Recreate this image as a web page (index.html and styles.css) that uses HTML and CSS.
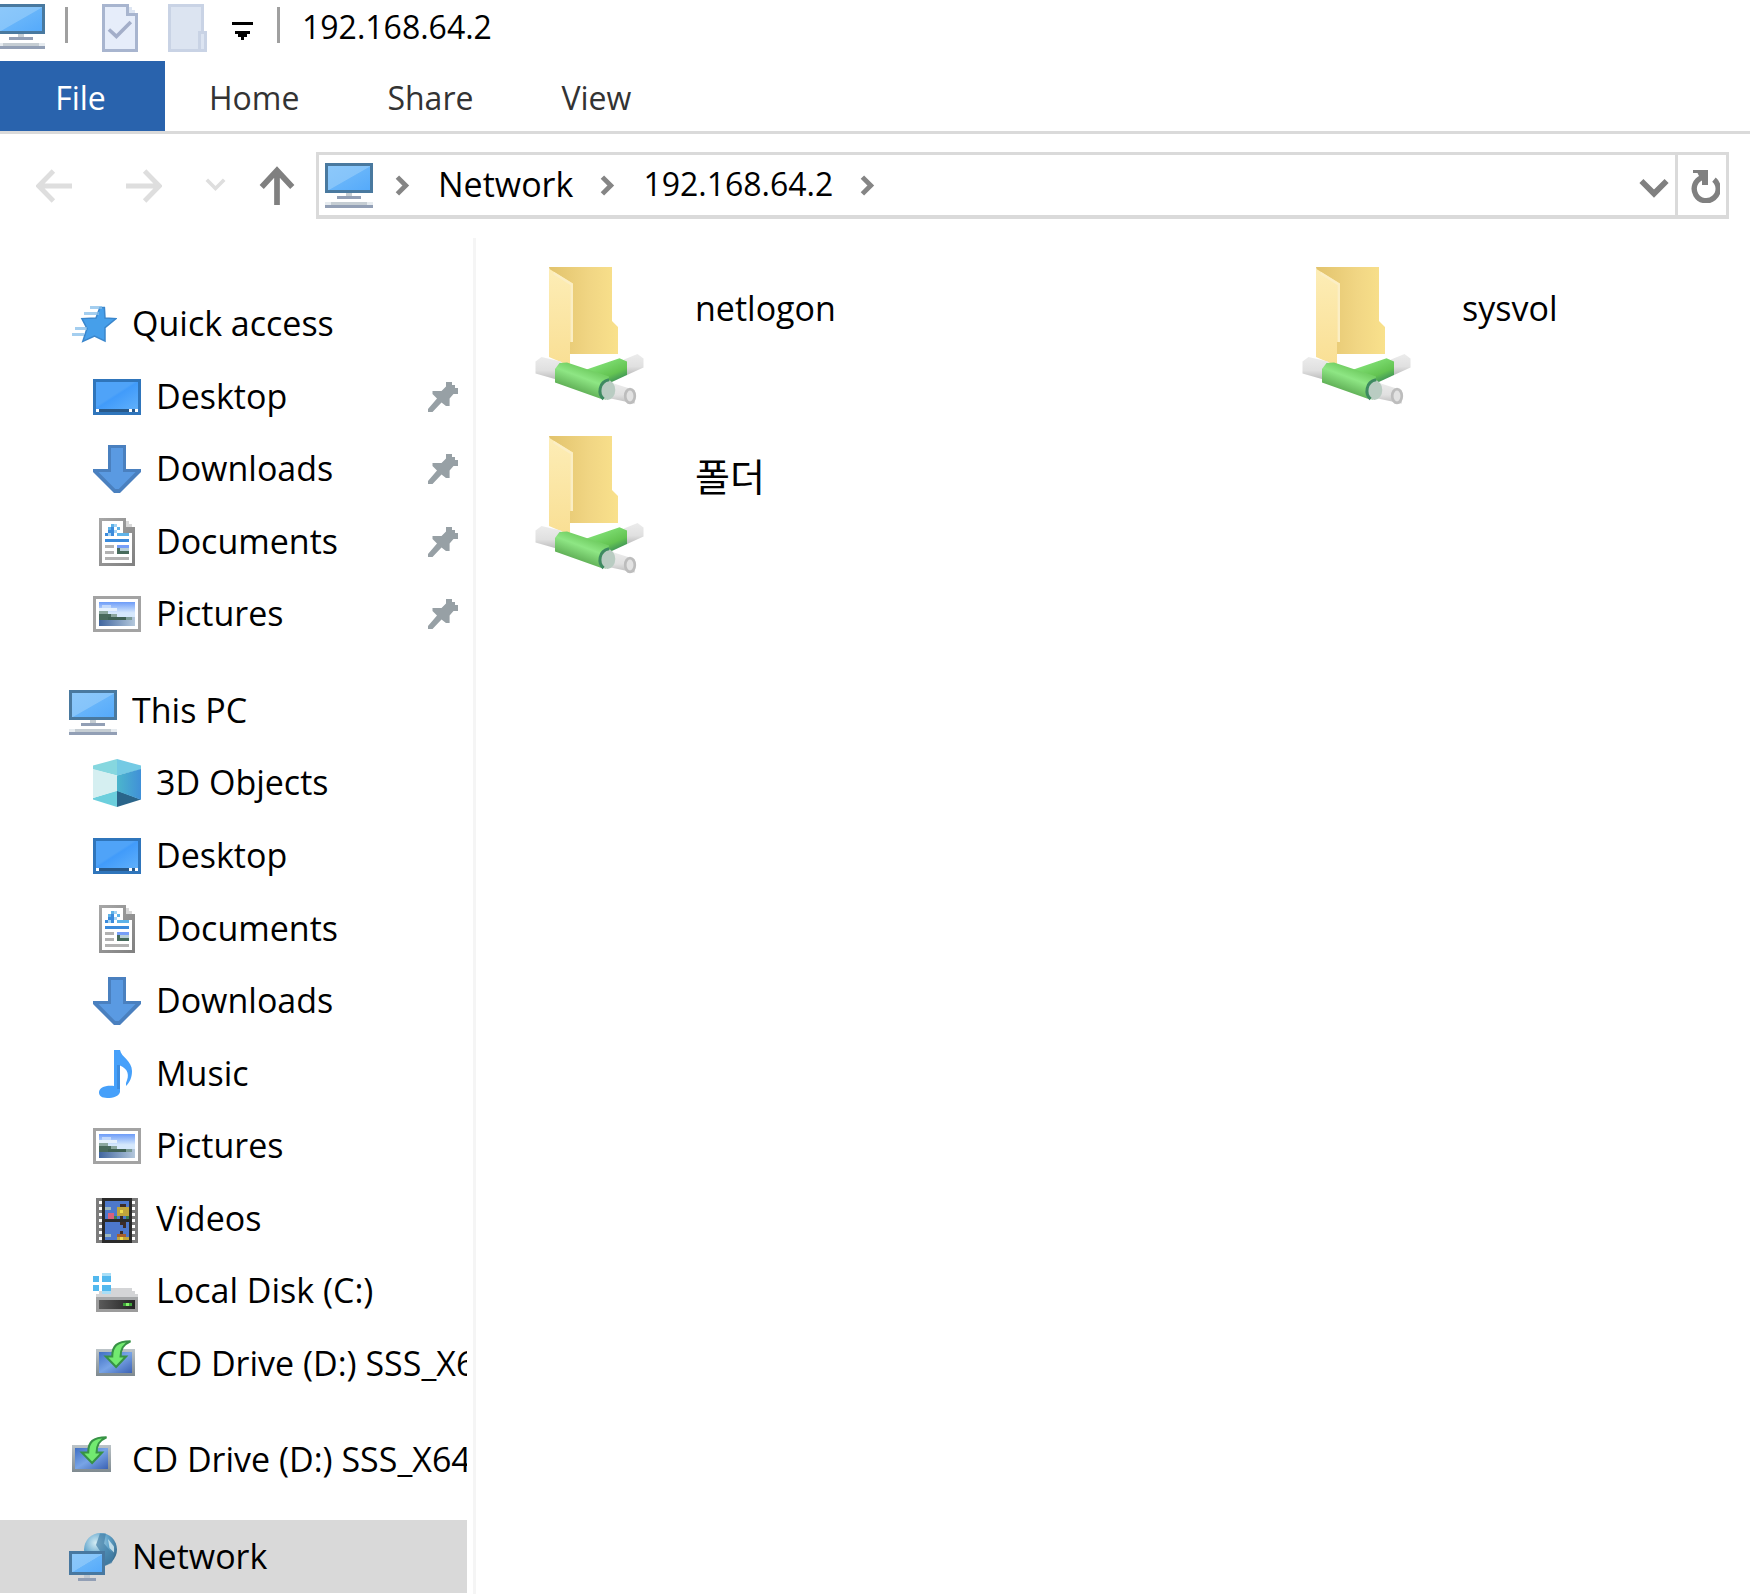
FILE: index.html
```html
<!DOCTYPE html>
<html lang="en">
<head>
<meta charset="utf-8">
<title>192.168.64.2</title>
<meta name="viewport" content="width=device-width, initial-scale=1">
<link rel="stylesheet" href="styles.css">
</head>
<body>
<svg class="sprite" aria-hidden="true">
  <defs>
    <linearGradient id="g-screen" x1="0" y1="0" x2="1" y2="1"><stop offset="0" stop-color="#8cc8fa"/><stop offset=".5" stop-color="#85c4fa"/><stop offset=".52" stop-color="#66b4fa"/><stop offset="1" stop-color="#55aafb"/></linearGradient>
    <linearGradient id="g-desk" x1="0" y1="0" x2="1" y2="1"><stop offset="0" stop-color="#4fa3f8"/><stop offset=".45" stop-color="#4fa3f8"/><stop offset=".5" stop-color="#419bfa"/><stop offset="1" stop-color="#5fb0fb"/></linearGradient>
    <linearGradient id="g-paper" x1="0" y1="0" x2="1" y2="1"><stop offset="0" stop-color="#a8a8a8"/><stop offset="1" stop-color="#808080"/></linearGradient>
    <linearGradient id="g-right" x1="0" y1="0" x2="1" y2="0"><stop offset="0" stop-color="#4cb6cc"/><stop offset="1" stop-color="#4090d8"/></linearGradient>
    <linearGradient id="g-cd" x1="0" y1="0" x2="1" y2="1"><stop offset="0" stop-color="#3f6fc4"/><stop offset=".5" stop-color="#78a4e6"/><stop offset="1" stop-color="#3c62b4"/></linearGradient>
    <linearGradient id="g-edge" x1="0" y1="0" x2="0" y2="1"><stop offset="0" stop-color="#bcc4c8"/><stop offset="1" stop-color="#7f8a90"/></linearGradient>
    <linearGradient id="g-dark" x1="0" y1="0" x2="1" y2="0"><stop offset="0" stop-color="#5a5a5a"/><stop offset="1" stop-color="#222"/></linearGradient>
    <linearGradient id="g-sky" x1="0" y1="0" x2="0" y2="1"><stop offset="0" stop-color="#6d9cf8"/><stop offset=".6" stop-color="#d5e8fc"/><stop offset="1" stop-color="#d5e8fc"/></linearGradient>
    <linearGradient id="g-sea" x1="0" y1="0" x2="1" y2="0"><stop offset="0" stop-color="#41669f"/><stop offset="1" stop-color="#b4c8dc"/></linearGradient>
    <radialGradient id="g-globe" cx=".35" cy=".3" r=".8"><stop offset="0" stop-color="#d4ecf4"/><stop offset=".5" stop-color="#62a5cc"/><stop offset="1" stop-color="#2f5f80"/></radialGradient>
    <linearGradient id="g-back" x1="0" y1="0" x2="1" y2="0"><stop offset="0" stop-color="#e2c36c"/><stop offset=".6" stop-color="#f1d684"/><stop offset="1" stop-color="#f9e18c"/></linearGradient>
    <linearGradient id="g-flap" x1="0" y1="0" x2="0" y2="1"><stop offset="0" stop-color="#fdedb6"/><stop offset="1" stop-color="#f9df94"/></linearGradient>
    <linearGradient id="g-pipe" gradientUnits="userSpaceOnUse" x1="17" y1="34" x2="14" y2="42"><stop offset="0" stop-color="#74d066"/><stop offset=".35" stop-color="#8ee684"/><stop offset="1" stop-color="#5aa850"/></linearGradient>
    <linearGradient id="g-arm" gradientUnits="userSpaceOnUse" x1="23" y1="32" x2="26" y2="39"><stop offset="0" stop-color="#7cdc70"/><stop offset=".6" stop-color="#64c452"/><stop offset="1" stop-color="#3c8e58"/></linearGradient>
    <linearGradient id="g-cap" x1="0" y1="0" x2="0" y2="1"><stop offset="0" stop-color="#ececec"/><stop offset=".6" stop-color="#e0e0e0"/><stop offset="1" stop-color="#bcbcbc"/></linearGradient>
  </defs>
  <symbol id="i-pc" viewBox="0 0 16 16"><g shape-rendering="crispEdges">
    <path fill="#49799f" d="M0 1h16v10H0z"/><path fill="url(#g-screen)" d="M1 2h14v8H1z"/>
    <path fill="#c5cdd3" d="M7 11h2v1H7z"/><path fill="#929fb5" d="M4 12h8v1H4zM0 15h16v1H0z"/>
    <path fill="#e6ebef" d="M0 14h16v1H0z"/><path fill="#c5cdd3" d="M2 14h12v1H2z"/></g></symbol>
  <symbol id="i-desktop" viewBox="0 0 16 16"><g shape-rendering="crispEdges">
    <path fill="#2f75bb" d="M0 2h16v12H0z"/><path fill="url(#g-desk)" d="M1 3h14v9H1z"/>
    <path fill="#fff" d="M1 12h14v1H1z"/><path fill="#28598a" d="M2 12h10v1H2zM13 12h1v1h-1z"/></g></symbol>
  <symbol id="i-down" viewBox="0 0 16 16">
    <path fill="#4a80bf" d="M5 0h6v8h5v1l-7 7H7L0 9V8h5z"/><path fill="#5a9ae2" d="M6 1h4v8h4.200L8.600 14.700H7.400L1.800 9H6z"/></symbol>
  <symbol id="i-doc" viewBox="0 0 16 16"><g shape-rendering="crispEdges">
    <path fill="url(#g-paper)" d="M2 0h9v1h1v1h1v1h1v13H2z"/><path fill="#fff" d="M3 1h7v4h3v10H3z"/>
    <path fill="#d9d9d9" d="M11 1h1v1h1v1h-2z"/><path fill="#5fb3e8" d="M8 5h4v1H8zM6 2h1v1H6zM5 3h2v1H5zM8 3h1v1H8z"/>
    <path fill="#3b8bdc" d="M4 7h8v1H4zM6 3h1v3H6zM5 4h1v1H5zM4 5h1v1H4z"/><path fill="#a5d3f3" d="M7 4h1v1H7zM5 5h1v1H5zM7 2h1v1H7z"/>
    <path fill="#b2b2b2" d="M4 9h3v1H4zM4 11h3v1H4zM4 13h8v1H4z"/>
    <path fill="#779ff8" d="M8 9h4v1H8z"/><path fill="#b8cfd8" d="M8 10h4v1H8z"/><path fill="#476b5c" d="M8 11h4v1H8zM8 10h1v1H8z"/></g></symbol>
  <symbol id="i-pic" viewBox="0 0 16 16"><g shape-rendering="crispEdges">
    <path fill="#a3a3a3" d="M0 2h16v12H0z"/><path fill="#fff" d="M1 3h14v10H1z"/>
    <path fill="url(#g-sky)" d="M2 4h12v6H2z"/><path fill="#c3d9fb" d="M3 5h3v1H3z"/><path fill="#e6f1fd" d="M2 6h6v1H2z"/><path fill="url(#g-sea)" d="M2 9h12v3H2z"/>
    <path fill="#8ba79f" d="M2 7h3v1h3v1H2z"/><path fill="#48695c" d="M2 8h4v1h3v1H2z"/><path fill="#3f6154" d="M5 9h6v1H5z"/><path fill="#7c9c98" d="M11 9h2v1h-2z"/></g></symbol>
  <symbol id="i-cube" viewBox="0 0 16 16">
    <path fill="#86d7df" d="M0 2.200 8 0v5.500L0 3.500z"/><path fill="#74cae4" d="M16 2.200 8 0v5.500l8-2z"/>
    <path fill="#6ccfdd" d="M0 13.500 8 16v-5.500L0 13z"/><path fill="#2a658a" d="M16 13.500 8 16v-5.500z"/>
    <path fill="#d5eff1" d="M0 3.300 8 5.500v5.200L0 13z"/><path fill="url(#g-right)" d="M16 3.300 8 5.500v5.200L16 13.600z"/></symbol>
  <symbol id="i-music" viewBox="0 0 16 16">
    <path fill="#46a0fa" d="M5 0h2c.4 2.400 4 3.600 4 7 0 2-.6 3.600-2 5v-1c1.200-2.600.8-4.600-2-5.800V14c-.4 1.400-2 2-4.300 2C1 16 2 15.400 2 14.200 2 12.600 3 11.700 5 12z"/>
    <path fill="#3c8cdf" d="M6 5h1v8H6z"/></symbol>
  <symbol id="i-video" viewBox="0 0 16 16"><g shape-rendering="crispEdges">
    <path fill="#7c7c7c" d="M1 1h14v15H1z"/><path fill="#2a2a2a" d="M3 1h10v15H3z"/>
    <path fill="#fff" d="M2 2h1v1H2zM2 4h1v1H2zM2 6h1v1H2zM2 8h1v1H2zM2 10h1v1H2zM2 12h1v1H2zM2 14h1v1H2zM13 2h1v1h-1zM13 4h1v1h-1zM13 6h1v1h-1zM13 8h1v1h-1zM13 10h1v1h-1zM13 12h1v1h-1zM13 14h1v1h-1z"/>
    <path fill="#4d78cc" d="M4 2h8v6H4zM4 9h8v6H4z"/><path fill="#c0a53c" d="M8 4h4v3H8zM8 14h4v1H8z"/><path fill="#d8607c" d="M5 6h2v2H5z"/>
    <path fill="#9eb8bc" d="M4 4h2v1H4zM4 13h2v1H4z"/><path fill="#3c2c28" d="M9 3h2v1H9zM9 7h1v1H9zM9 9h2v1H9zM10 10h1v1h-1zM9 12h1v1H9z"/><path fill="#a8602c" d="M8 13h3v1H8z"/><path fill="#f0dc4c" d="M9 5h1v1H9zM9 14h1v1H9z"/><path fill="#3b7f50" d="M7 7h1v1H7zM11 7h1v1h-1z"/></g></symbol>
  <symbol id="i-disk" viewBox="0 0 16 16"><g shape-rendering="crispEdges">
    <path fill="#d4d5d7" d="M4 7h9v1h1v1h1v2H1V9h1V8h2z"/><path fill="#a4a6a8" d="M1 10h14v1H1z"/><path fill="#9c9c9c" d="M1 11h14v4H1z"/><path fill="url(#g-dark)" d="M2 11h12v3H2z"/>
    <path fill="#3fa43a" d="M10 12h3v1h-3z"/><path fill="#86f46c" d="M11 12h1v1h-1z"/>
    <path fill="#a9def6" d="M3 2h3v1H3zM3 8h3v1H3z"/><path fill="#52b8ee" d="M0 3h2v2H0zM3 3h3v2H3zM0 6h2v2H0zM3 6h3v2H3z"/></g></symbol>
  <symbol id="i-cd" viewBox="0 0 16 16">
    <path fill="url(#g-edge)" d="M1 3h13v9H1z"/><path fill="url(#g-cd)" d="M2 4h11v7H2z"/>
    <path fill="#72ea70" stroke="#379245" stroke-width=".7" d="M6.400 5.500C6.400 2 8 .4 12.500.4 10 1.500 9.200 3 9.200 5.500h1.800L7.700 9 4.300 5.500z"/></symbol>
  <symbol id="i-net" viewBox="0 0 16 16">
    <circle cx="10.500" cy="5.500" r="5.500" fill="url(#g-globe)"/><path fill="#437fa7" d="M10.300.2h2l-.6 3.300 3.300 4-.7 2.500L12 11l-1-4-2-3z" opacity=".7"/><path fill="#d9edf4" d="M13 2l2 2.500v2L13.500 5z" opacity=".8"/>
    <g shape-rendering="crispEdges"><path fill="#4878a0" d="M0 6h12v8H0z"/><path fill="url(#g-screen)" d="M1 7h10v6H1z"/><path fill="#c0c8d0" d="M5 14h2v1H5z"/><path fill="#929fb5" d="M3 15h6v1H3z"/></g></symbol>
  <symbol id="i-star" viewBox="0 0 16 16">
    <path fill="#469fea" stroke="#3a86cc" stroke-width=".5" d="M10.300 2.500h1.500L12 6l3.700.2L12 9.200V13.700L8.500 12l-3.900 1.800L6 9.500 4.300 6.200 9 6z"/>
    <path fill="#85bde9" d="M7 2h4v1H7zM5 4h5v1H5zM2 9h4v1H2zM1 11h4v1H1z" opacity=".75"/></symbol>
  <symbol id="i-pin" viewBox="0 0 10 10">
    <path fill="#97a0a5" d="M6 0h2v1h1v1h1v2H8.500L7.200 5.500V8H6L4.500 6.800 1.500 10H0V9l3-3.500L1.500 4V3h3L6 1.500z"/></symbol>
  <symbol id="i-check" viewBox="0 0 12 16"><g shape-rendering="crispEdges">
    <path fill="#a8b5cf" d="M0 0h9v1h1v1h1v1h1v13H0z"/><path fill="#e6edfa" d="M1 1h7v3h3v11H1z"/><path fill="#dde5f2" d="M9 1h1v1h1v1H9z"/></g>
    <path fill="none" stroke="#a3aec9" stroke-width="1.200" d="m2.300 8.500 2.500 2.300L9.600 6"/></symbol>
  <symbol id="i-folder" viewBox="0 0 13 16"><g shape-rendering="crispEdges">
    <path fill="#c9d3e5" d="M0 0h12v9h1v7H0z"/><path fill="#dce4f1" d="M1 1h10v8h-1v6H1zM11 10h1v5h-1z"/></g></symbol>
  <symbol id="i-crumb" viewBox="0 0 5 7"><path fill="none" stroke="#858585" stroke-width="1.600" d="M.8.700 3.600 3.500.8 6.300"/></symbol>
  <symbol id="i-share" viewBox="0 0 37 46">
    <path fill="url(#g-back)" d="M5 0h21v18l2 2v9H12z"/><path fill="url(#g-flap)" d="M5 0.600 13 5.500V25h-1v8l-7-3z"/>
    <path fill="none" stroke="#fbeec4" stroke-width=".8" d="M6.500 2 12.600 5.800V25"/>
    <path fill="url(#g-cap)" d="M.5 31.500 2.500 30 9 31.500 7.500 37.500.5 35.500z"/>
    <path fill="url(#g-cap)" d="M30 30.800 34.500 29l2 1.500v3L31 36z"/>
    <path fill="url(#g-arm)" d="M17.500 34.200 28.500 30.400 31 31.500V36l-6.500 3-7-2z"/>
    <path fill="url(#g-pipe)" d="M8.500 32 11 31.800 25 36.500 24 44.200 22 43.800 7 38.500V34z"/>
    <path fill="url(#g-cap)" d="M25 38.300 33.500 41v4.500L24 43.500z"/>
    <ellipse cx="24.500" cy="41" rx="2.600" ry="3.300" fill="#b9ccc2"/><path fill="none" stroke="#3d8a60" stroke-width="1" d="M25 37.600c-3.400.6-3.800 4.800-1.800 6.400"/>
    <ellipse cx="32" cy="43" rx="1.600" ry="2.300" fill="#e2e2e2" stroke="#bdbdbd" stroke-width=".9"/></symbol>
</svg>

<header class="titlebar">
  <svg class="title-pc" viewBox="1 1 15 15"><use href="#i-pc" width="16" height="16"/></svg>
  <span class="sep"></span>
  <button class="tool tool-check" aria-label="Properties"><svg width="36" height="48"><use href="#i-check"/></svg></button>
  <button class="tool tool-folder" aria-label="New folder"><svg width="39" height="48"><use href="#i-folder"/></svg></button>
  <button class="tool tool-more" aria-label="Customize Quick Access Toolbar"><svg width="21" height="18" viewBox="0 0 7 6" shape-rendering="crispEdges"><path d="M0 0h7v1H0zM1 3h5v1H5v1H4v1H3V5H2V4H1z"/></svg></button>
  <span class="sep"></span>
  <h1 class="title">192.168.64.2</h1>
</header>

<div class="tabs" role="tablist">
  <button class="tab tab-file" role="tab">File</button>
  <button class="tab" role="tab">Home</button>
  <button class="tab" role="tab">Share</button>
  <button class="tab" role="tab">View</button>
</div>

<div class="navbar">
  <div class="history">
    <button class="tool" aria-label="Back" disabled><svg width="36" height="36" viewBox="0 0 12 12" fill="none" stroke="#dedede" stroke-width="1.600"><path d="M12 6H1M5.800 1 .9 6l4.900 5"/></svg></button>
    <button class="tool tool-forward" aria-label="Forward" disabled><svg width="36" height="36" viewBox="0 0 12 12" fill="none" stroke="#dedede" stroke-width="1.600"><path d="M0 6h11M6.200 1l4.900 5-4.900 5"/></svg></button>
    <button class="tool tool-recent" aria-label="Recent locations" disabled><svg width="21" height="15" viewBox="0 0 7 5" fill="none" stroke="#dedede" stroke-width="1.200"><path d="m.6.600 2.900 2.900L6.400.6"/></svg></button>
    <button class="tool tool-up" aria-label="Up"><svg width="36" height="39" viewBox="0 0 12 13" fill="none" stroke="#808080" stroke-width="1.900"><path d="M6 13V1.500M.9 7 6 1.500 11.100 7"/></svg></button>
  </div>
  <div class="address">
    <nav class="crumbs" aria-label="Address">
      <svg class="pc" width="48" height="48"><use href="#i-pc"/></svg>
      <svg class="crumb" width="15" height="21"><use href="#i-crumb"/></svg>
      <a href="#network">Network</a>
      <svg class="crumb" width="15" height="21"><use href="#i-crumb"/></svg>
      <a class="ip" href="#host">192.168.64.2</a>
      <svg class="crumb" width="15" height="21"><use href="#i-crumb"/></svg>
    </nav>
    <button class="tool drop" aria-label="Previous locations"><svg width="30" height="21" viewBox="0 0 10 7" fill="none" stroke="#808080" stroke-width="1.900"><path d="m.8 1 4.200 4.200L9.200 1"/></svg></button>
    <button class="tool refresh" aria-label="Refresh"><svg width="30" height="33" viewBox="0 0 10 11"><path fill="none" stroke="#808080" stroke-width="1.800" d="M8 3.200A4 4 0 1 1 4 2.500"/><path fill="#808080" d="M1 0h5v5H4V2.500L3.500 3 2.500 1H1z"/></svg></button>
  </div>
</div>

<div class="body">
  <nav class="sidebar" aria-label="Navigation pane">
    <ul class="group quick">
      <li><a class="row root" href="#quick"><svg><use href="#i-star"/></svg><span>Quick access</span></a></li>
      <li><a class="row" href="#desktop"><svg><use href="#i-desktop"/></svg><span>Desktop</span><svg class="pin"><use href="#i-pin"/></svg></a></li>
      <li><a class="row" href="#downloads"><svg><use href="#i-down"/></svg><span>Downloads</span><svg class="pin"><use href="#i-pin"/></svg></a></li>
      <li><a class="row" href="#documents"><svg><use href="#i-doc"/></svg><span>Documents</span><svg class="pin"><use href="#i-pin"/></svg></a></li>
      <li><a class="row" href="#pictures"><svg><use href="#i-pic"/></svg><span>Pictures</span><svg class="pin"><use href="#i-pin"/></svg></a></li>
    </ul>
    <ul class="group computer">
      <li><a class="row root" href="#pc"><svg><use href="#i-pc"/></svg><span>This PC</span></a></li>
      <li><a class="row" href="#objects"><svg><use href="#i-cube"/></svg><span>3D Objects</span></a></li>
      <li><a class="row" href="#desktop"><svg><use href="#i-desktop"/></svg><span>Desktop</span></a></li>
      <li><a class="row" href="#documents"><svg><use href="#i-doc"/></svg><span>Documents</span></a></li>
      <li><a class="row" href="#downloads"><svg><use href="#i-down"/></svg><span>Downloads</span></a></li>
      <li><a class="row" href="#music"><svg viewBox="-2 0 16 16"><path fill="#46a0fa" d="M5 0h2c.4 2.400 4 3.600 4 7 0 2-.6 3.600-2 5v-1c1.200-2.600.8-4.600-2-5.800V14c-.4 1.400-2 2-4.300 2C1 16 0 15.400 0 14.200 0 12.600 2 11.700 5 12z"/><path fill="#3c8cdf" d="M6 5h1v8H6z"/></svg><span>Music</span></a></li>
      <li><a class="row" href="#pictures"><svg><use href="#i-pic"/></svg><span>Pictures</span></a></li>
      <li><a class="row" href="#videos"><svg><use href="#i-video"/></svg><span>Videos</span></a></li>
      <li><a class="row" href="#c"><svg><use href="#i-disk"/></svg><span>Local Disk (C:)</span></a></li>
      <li><a class="row" href="#d"><svg><use href="#i-cd"/></svg><span>CD Drive (D:) SSS_X64</span></a></li>
    </ul>
    <ul class="group">
      <li><a class="row root" href="#d"><svg><use href="#i-cd"/></svg><span>CD Drive (D:) SSS_X64</span></a></li>
    </ul>
    <ul class="group">
      <li><a class="row root selected" href="#network" aria-current="page"><svg><use href="#i-net"/></svg><span>Network</span></a></li>
    </ul>
  </nav>
  <main class="files">
    <a class="file" href="#netlogon"><svg><use href="#i-share"/></svg><span>netlogon</span></a>
    <a class="file" href="#sysvol"><svg><use href="#i-share"/></svg><span>sysvol</span></a>
    <a class="file" href="#folder"><svg><use href="#i-share"/></svg><span lang="ko">폴더</span></a>
  </main>
</div>
</body>
</html>
```
FILE: styles.css
```css
* {
  box-sizing: border-box;
}

body {
  display: flex;
  flex-direction: column;
  min-height: 100vh;
  margin: 0;
  background: #fff;
  color: #000;
  font: 34px/48px "Open Sans", "Noto Sans CJK KR", sans-serif;
}

a {
  color: inherit;
  text-decoration: none;
}

svg {
  display: block;
  flex: none;
}

.sprite {
  position: absolute;
  width: 0;
  height: 0;
}

.tool {
  flex: none;
  padding: 0;
  border: 0;
  background: none;
}

/* Title bar */
.titlebar {
  display: flex;
  align-items: flex-start;
  height: 61px;
  padding-top: 4px;
}

.title-pc {
  width: 45px;
  height: 45px;
}

.sep {
  width: 3px;
  height: 36px;
  margin: 3px 0 0 20px;
  background: #a0a0a0;
}

.tool-check {
  margin-left: 34px;
}

.tool-folder {
  margin-left: 30px;
}

.tool-more {
  margin: 18px 4px 0 25px;
}

.title {
  margin: 0 0 0 22px;
  font-size: 32px;
  font-weight: 400;
  line-height: 46px;
}

/* Ribbon tabs */
.tabs {
  display: flex;
  height: 73px;
  border-bottom: 3px solid #dadada;
}

.tab {
  padding: 4px 44px 0;
  border: 0;
  background: none;
  color: #333;
  font: inherit;
  font-size: 32px;
}

.tab-file {
  width: 165px;
  padding: 4px 44px 0 40px;
  background: #2963ad;
  color: #fff;
}

/* Navigation and address */
.navbar {
  display: flex;
  padding: 18px 21px 19px 36px;
}

.history {
  display: flex;
  align-items: center;
  width: 280px;
}

.tool-forward {
  margin-left: 54px;
}

.tool-recent {
  margin-left: 43px;
}

.tool-up {
  margin-left: 33px;
}

.address {
  display: flex;
  flex: 1;
  height: 67px;
  border: 3px solid #dadada;
  border-bottom-width: 4px;
}

.crumbs {
  display: flex;
  flex: 1;
  align-items: center;
  padding: 0 6px 3px;
}

.crumb {
  margin: 4px 28px 0 27px;
}

.pc {
  margin-right: -5px;
}

.ip {
  font-size: 32px;
}

.drop {
  padding: 6px 6px 0;
}

.refresh {
  padding: 3px 8px 0 12px;
  width: 51px;
  border-left: 3px solid #dadada;
}

/* Navigation pane */
.body {
  display: flex;
  flex: 1;
}

.sidebar {
  display: flex;
  flex: none;
  flex-direction: column;
  gap: 24px;
  width: 476px;
  padding: 50px 6px 1px 0;
  border-right: 3px solid #f5f5f5;
}

.group {
  display: flex;
  flex: 1 1 0;
  flex-direction: column;
  margin: 0;
  padding: 0;
  list-style: none;
}

.quick {
  flex-grow: 5;
}

.computer {
  flex-grow: 10;
}

.group li {
  display: flex;
  flex: 1 1 0;
}

.row {
  display: flex;
  flex: 1;
  align-items: center;
  gap: 15px;
  min-width: 0;
  padding-left: 93px;
}

.row svg {
  width: 48px;
  height: 48px;
}

.row span {
  flex: 1;
  overflow: hidden;
  padding-bottom: 2px;
  white-space: nowrap;
}

.root {
  padding-left: 69px;
}

.selected {
  background: #d9d9d9;
}

.row .pin {
  width: 30px;
  height: 30px;
  margin-right: 9px;
}

/* Files */
.files {
  display: grid;
  flex: 1;
  grid-template-columns: 767px 1fr;
  align-content: start;
  gap: 31px 0;
  padding: 29px 0 0 58px;
}

.file {
  display: flex;
  gap: 50px;
}

.file svg {
  width: 111px;
  height: 138px;
}

.file span {
  padding-top: 17px;
}

.file span:lang(ko) {
  padding-top: 16px;
  font-size: 38px;
}
```
